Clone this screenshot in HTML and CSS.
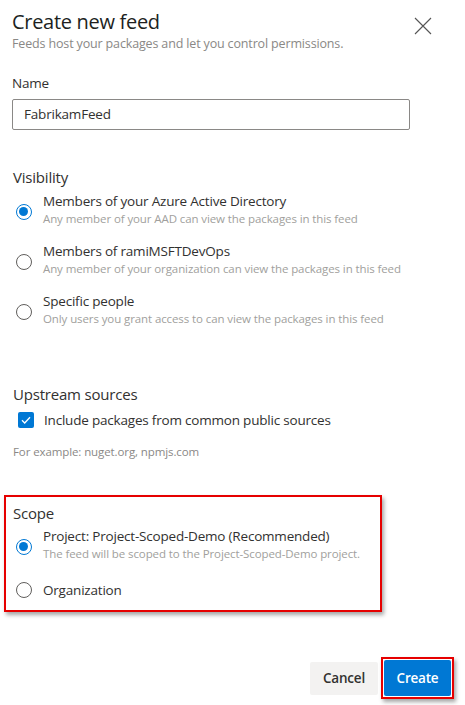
FILE: index.html
```html
<!DOCTYPE html>
<html>
<head>
<meta charset="utf-8">
<link rel="stylesheet" href="styles.css">
</head>
<body>
<div class="panel">
  <div class="header">
    <div class="titles">
      <div class="title">Create new feed</div>
      <div class="subtitle">Feeds host your packages and let you control permissions.</div>
    </div>
    <svg class="close" width="18" height="18" viewBox="0 0 18 18"><path d="M1 1L17 17M17 1L1 17" stroke="#555" stroke-width="1.1" fill="none"/></svg>
  </div>

  <div class="field">
    <div class="label">Name</div>
    <div class="input">FabrikamFeed</div>
  </div>

  <div class="section visibility">
    <div class="heading">Visibility</div>
    <div class="options">
      <div class="option">
        <span class="radio checked"></span>
        <div class="otext">
          <div class="olabel">Members of your Azure Active Directory</div>
          <div class="osub">Any member of your AAD can view the packages in this feed</div>
        </div>
      </div>
      <div class="option">
        <span class="radio"></span>
        <div class="otext">
          <div class="olabel">Members of ramiMSFTDevOps</div>
          <div class="osub">Any member of your organization can view the packages in this feed</div>
        </div>
      </div>
      <div class="option">
        <span class="radio"></span>
        <div class="otext">
          <div class="olabel">Specific people</div>
          <div class="osub">Only users you grant access to can view the packages in this feed</div>
        </div>
      </div>
    </div>
  </div>

  <div class="section upstream">
    <div class="heading">Upstream sources</div>
    <div class="check-row">
      <span class="checkbox"><svg width="16" height="16" viewBox="0 0 16 16"><path d="M4 8.3L6.7 11L12 5.2" stroke="#fff" stroke-width="1.3" fill="none"/></svg></span>
      <span class="clabel">Include packages from common public sources</span>
    </div>
    <div class="hint">For example: nuget.org, npmjs.com</div>
  </div>

  <div class="scope highlight">
    <div class="heading">Scope</div>
    <div class="option">
      <span class="radio checked"></span>
      <div class="otext">
        <div class="olabel">Project: Project-Scoped-Demo (Recommended)</div>
        <div class="osub">The feed will be scoped to the Project-Scoped-Demo project.</div>
      </div>
    </div>
    <div class="option single">
      <span class="radio"></span>
      <div class="otext">
        <div class="olabel">Organization</div>
      </div>
    </div>
  </div>

  <div class="footer">
    <button class="btn cancel">Cancel</button>
    <span class="create-wrap highlight"><button class="btn create">Create</button></span>
  </div>
</div>
</body>
</html>
```

FILE: styles.css
```css
* { box-sizing: border-box; }
html, body { margin: 0; padding: 0; background: #fff; }
body {
  font-family: "Open Sans", "Noto Sans", sans-serif;
  color: #323130;
  width: 465px;
  height: 705px;
  overflow: hidden;
}
.panel { padding: 0; }
.header {
  display: flex;
  justify-content: space-between;
  align-items: flex-start;
  padding: 8px 33px 0 12px;
}
.title { font-size: 20px; line-height: 28px; color: #201f1e; letter-spacing: -0.3px; }
.subtitle { font-size: 12.5px; line-height: 18px; color: #8a8886; letter-spacing: -0.15px; margin-top: -1px; }
.close { margin-top: 9px; }
.field { padding: 20px 0 0 12px; }
.label { font-size: 13.5px; line-height: 20px; color: #323130; letter-spacing: -0.2px; }
.input {
  margin-top: 6px;
  width: 398px;
  height: 31px;
  border: 1px solid #8a8886;
  border-radius: 2px;
  padding: 0 11px;
  font-size: 13.5px;
  line-height: 29px;
  color: #323130;
  letter-spacing: -0.2px;
}
.section { padding-left: 13px; }
.visibility { margin-top: 36px; }
.heading { font-size: 15px; line-height: 22px; color: #323130; letter-spacing: -0.2px; }
.options { margin-top: 4px; display: flex; flex-direction: column; gap: 15px; }
.option { display: flex; align-items: center; gap: 11px; padding-left: 3px; }
.otext { display: flex; flex-direction: column; }
.olabel { font-size: 13.5px; line-height: 18px; color: #323130; letter-spacing: -0.2px; }
.osub { font-size: 11.5px; line-height: 17px; color: #a19f9d; letter-spacing: -0.1px; }
.radio {
  width: 16px; height: 16px; border-radius: 50%;
  border: 1px solid #605e5c;
  flex: none;
  margin-top: 5px;
  position: relative;
  background: #fff;
}
.radio.checked { border: 1.5px solid #0078d4; }
.radio.checked::after {
  content: ""; position: absolute;
  left: 2px; top: 2px; width: 9px; height: 9px;
  border-radius: 50%; background: #0078d4;
}
.upstream { margin-top: 56px; }
.check-row { display: flex; align-items: center; gap: 10px; margin-top: 5px; padding-left: 5px; }
.checkbox {
  width: 16px; height: 16px; border-radius: 2px; background: #0078d4; flex: none;
  display: flex;
}
.clabel { font-size: 13.5px; line-height: 20px; color: #323130; letter-spacing: -0.2px; }
.hint { font-size: 11.5px; line-height: 16px; color: #8a8886; margin-top: 14px; letter-spacing: -0.1px; }
.highlight {
  border: 2px solid #e60000;
  box-shadow: 2px 3px 4px rgba(0,0,0,0.35);
}
.scope {
  margin: 35px 0 0 4px;
  width: 378px;
  height: 117px;
  padding: 5px 0 0 7px;
}
.scope .option { padding-left: 3px; margin-top: 3px; }
.scope .option.single { margin-top: 19px; }
.scope .option.single .radio { margin-top: 0; }
.footer {
  display: flex;
  justify-content: flex-end;
  align-items: center;
  gap: 3px;
  padding-right: 11px;
  margin-top: 45px;
}
.btn {
  font-family: inherit;
  font-size: 13.5px;
  font-weight: 600;
  border: none;
  border-radius: 2px;
  height: 33px;
  padding: 0;
  letter-spacing: -0.2px;
}
.cancel { background: #f3f2f1; color: #323130; width: 68px; }
.create-wrap { display: inline-flex; padding: 1px; }
.create { background: #0078d4; color: #fff; width: 67px; height: 36px; }
```
